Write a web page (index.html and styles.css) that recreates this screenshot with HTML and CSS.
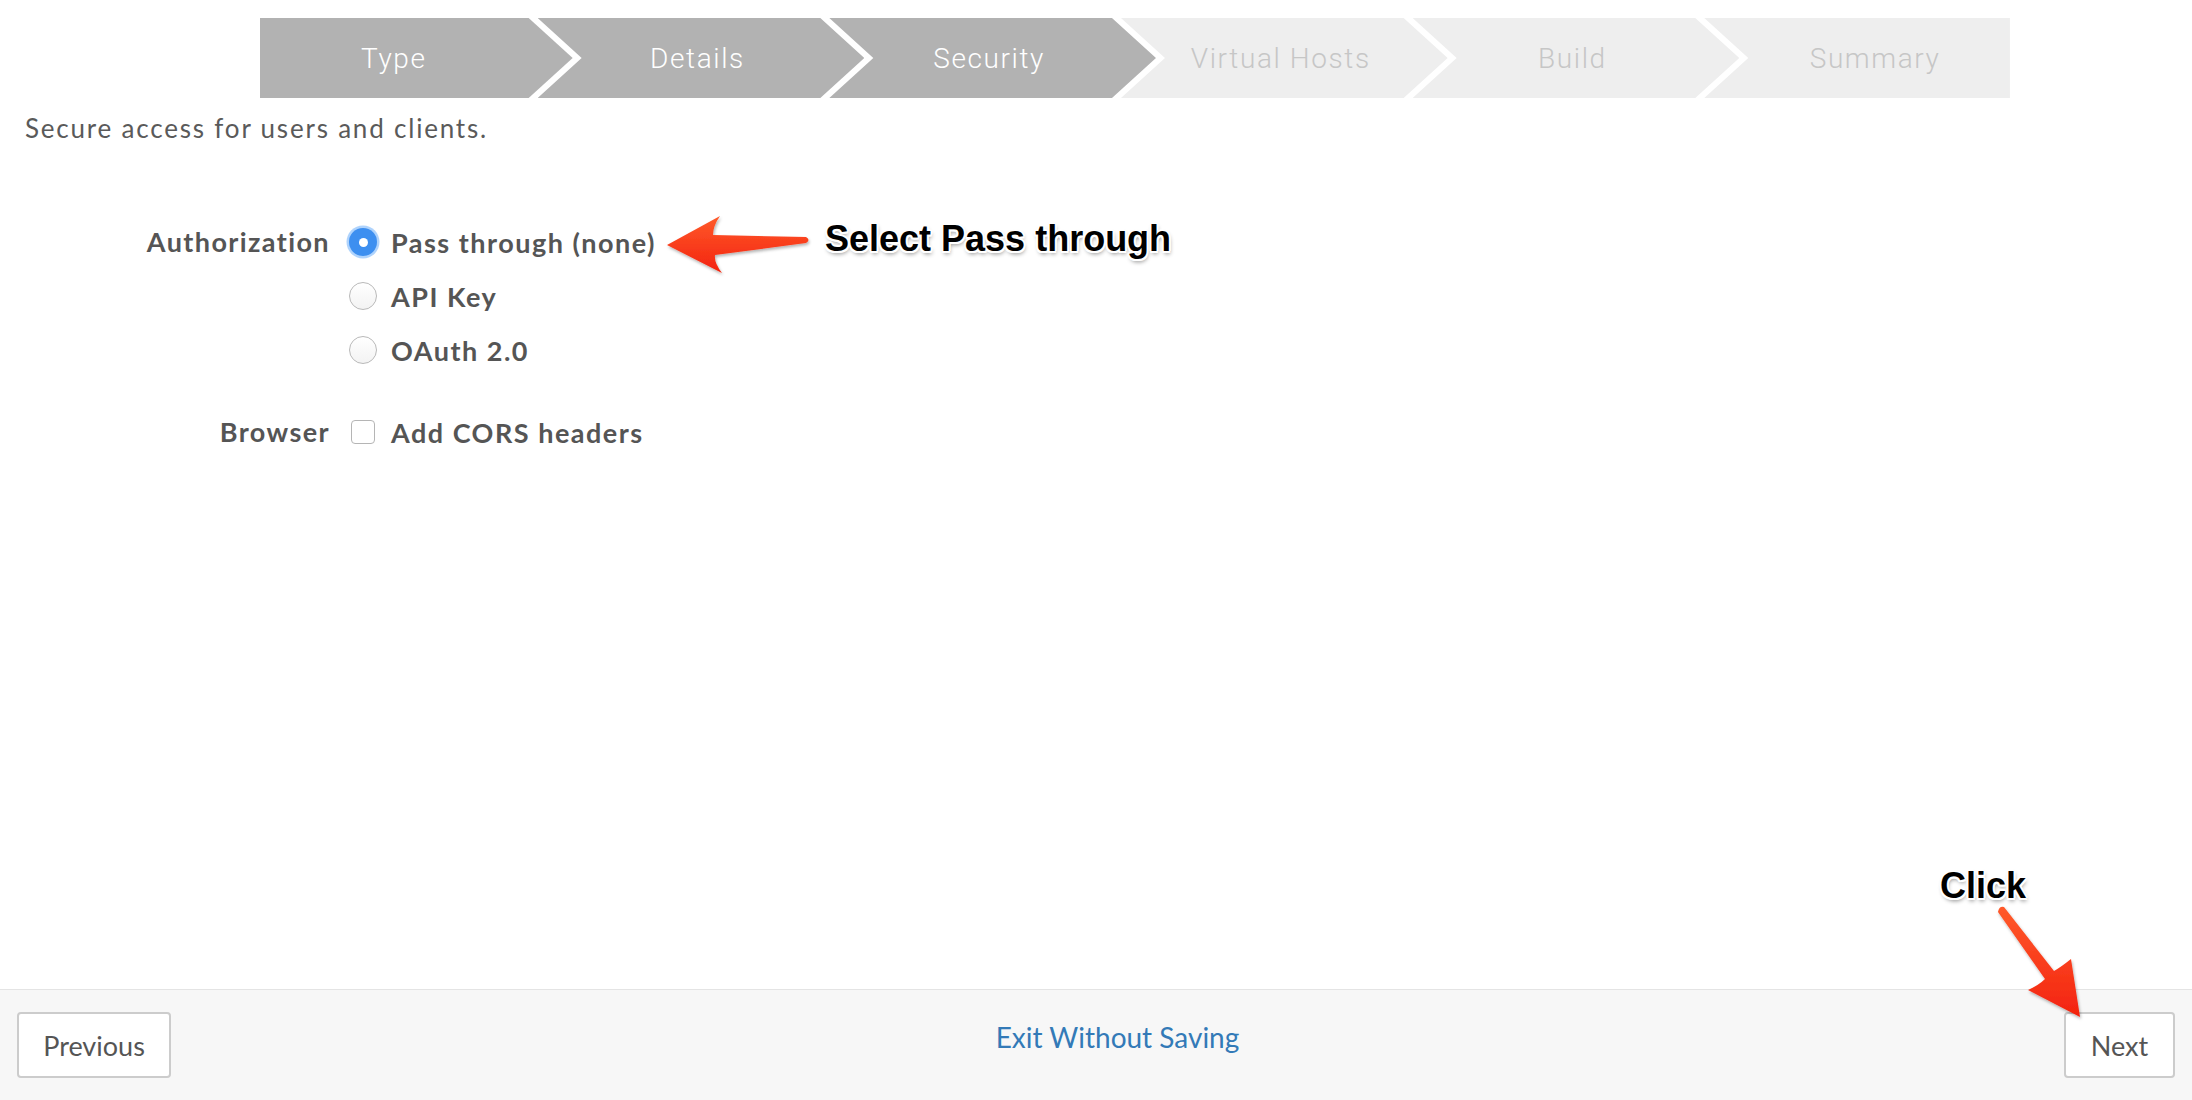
FILE: index.html
```html
<!DOCTYPE html>
<html lang="en">
<head>
<meta charset="utf-8">
<title>Build a Proxy - Security</title>
<link rel="stylesheet" href="styles.css">
</head>
<body>
<div class="page">
  <main class="content">
    <nav class="stepper">
      <div class="step done first"><span>Type</span></div>
      <div class="step done"><span>Details</span></div>
      <div class="step done"><span>Security</span></div>
      <div class="step todo"><span>Virtual Hosts</span></div>
      <div class="step todo"><span>Build</span></div>
      <div class="step todo last"><span>Summary</span></div>
    </nav>
    <p class="desc">Secure access for users and clients.</p>
    <div class="form">
      <div class="field">
        <div class="field-label">Authorization</div>
        <div class="options">
          <label class="opt"><span class="radio checked"></span><span class="opt-text">Pass through (none)</span></label>
          <label class="opt"><span class="radio"></span><span class="opt-text">API Key</span></label>
          <label class="opt"><span class="radio"></span><span class="opt-text">OAuth 2.0</span></label>
        </div>
      </div>
      <div class="field browser">
        <div class="field-label">Browser</div>
        <div class="options">
          <label class="opt"><span class="checkbox"></span><span class="opt-text">Add CORS headers</span></label>
        </div>
      </div>
    </div>
  </main>
  <footer class="footer">
    <button class="btn btn-prev" type="button">Previous</button>
    <a class="exit" href="#">Exit Without Saving</a>
    <button class="btn btn-next" type="button">Next</button>
  </footer>

  <div class="note note-select">Select Pass through</div>
  <div class="note note-click">Click</div>
  <svg class="arrows" width="2192" height="1100" viewBox="0 0 2192 1100" aria-hidden="true">
    <defs>
      <linearGradient id="red1" x1="0" y1="0" x2="0" y2="1">
        <stop offset="0" stop-color="#ff5a2a"/>
        <stop offset="1" stop-color="#f3220f"/>
      </linearGradient>
      <filter id="sh" x="-20%" y="-20%" width="140%" height="140%">
        <feDropShadow dx="1" dy="2" stdDeviation="1.5" flood-color="#000" flood-opacity="0.3"/>
      </filter>
    </defs>
    <path filter="url(#sh)" fill="url(#red1)" d="M667 245 L720 216 Q713 226 713 235 L806 237 Q811 240 806 243 L715 255 Q714 263 722 273 Z"/>
    <path filter="url(#sh)" fill="url(#red1)" d="M2080 1017 L2028 990 Q2039 985 2045 979 L1998 912 Q1999 906 2004 907 L2054 971 Q2061 967 2071 959 Z"/>
  </svg>
</div>
</body>
</html>
```

FILE: styles.css
```css
html, body {
  margin: 0;
  padding: 0;
  background: #ffffff;
}

.page {
  position: relative;
  width: 2192px;
  height: 1100px;
  display: flex;
  flex-direction: column;
  overflow: hidden;
  font-family: Lato, "Open Sans", "Liberation Sans", sans-serif;
  color: #555555;
}

.content {
  flex: 1;
}

/* ---------- stepper ---------- */
.stepper {
  display: flex;
  margin: 18px 0 0 260px;
  width: 1750px;
  height: 80px;
}

.step {
  flex: none;
  width: calc(1750px / 6);
  box-sizing: border-box;
  position: relative;
  z-index: 0;
  display: flex;
  align-items: center;
  justify-content: center;
  font-family: Roboto, "Liberation Sans", sans-serif;
  font-weight: 300;
  font-size: 28px;
  letter-spacing: 1.6px;
}

.step::before {
  content: "";
  position: absolute;
  z-index: -1;
  top: 0;
  bottom: 0;
  left: -14px;
  right: -21px;
  clip-path: polygon(0 0, calc(100% - 44px) 0, 100% 50%, calc(100% - 44px) 100%, 0 100%, 44px 50%);
}

.step.first::before {
  left: 0;
  clip-path: polygon(0 0, calc(100% - 44px) 0, 100% 50%, calc(100% - 44px) 100%, 0 100%);
}

.step.last::before {
  right: 0;
  clip-path: polygon(0 0, 100% 0, 100% 100%, 0 100%, 44px 50%);
}

.step.first { padding-right: 24px; }
.step.last { padding-left: 22px; }

.step.done { color: #ffffff; }
.step.done::before { background: #b2b2b2; }
.step.todo { color: #c6c6c6; }
.step.todo::before { background: #eeeeee; }

/* ---------- description ---------- */
.desc {
  margin: 13px 0 0 25px;
  font-size: 26px;
  line-height: 34px;
  letter-spacing: 1.8px;
  color: #5a5a5a;
}

/* ---------- form ---------- */
.form {
  margin-top: 70px;
  display: flex;
  flex-direction: column;
  gap: 28px;
}

.field {
  display: grid;
  grid-template-columns: 330px 1fr;
  column-gap: 19px;
  align-items: start;
}

.field-label {
  text-align: right;
  font-weight: 700;
  font-size: 27px;
  line-height: 54px;
  letter-spacing: 1.4px;
  color: #555555;
}

.options {
  display: flex;
  flex-direction: column;
}

.opt {
  display: flex;
  align-items: center;
  height: 54px;
  gap: 14px;
}

.opt-text {
  font-weight: 700;
  font-size: 27px;
  letter-spacing: 1.5px;
  color: #555555;
}

.radio {
  width: 28px;
  height: 28px;
  box-sizing: border-box;
  border-radius: 50%;
  border: 1.5px solid #b9b9b9;
  background: linear-gradient(#ffffff, #f3f3f3);
  position: relative;
}

.radio.checked {
  border: none;
  background: #3d8ff0;
  box-shadow: 0 0 0 2.5px rgba(110, 175, 250, 0.55);
}

.radio.checked::after {
  content: "";
  position: absolute;
  left: 50%;
  top: 50%;
  width: 9px;
  height: 9px;
  margin: -4.5px 0 0 -4.5px;
  border-radius: 50%;
  background: #ffffff;
}

.checkbox {
  width: 24px;
  height: 24px;
  margin: 0 2px;
  box-sizing: border-box;
  border: 1.5px solid #b5b5b5;
  border-radius: 4px;
  background: #ffffff;
}

/* ---------- footer ---------- */
.footer {
  height: 111px;
  box-sizing: border-box;
  border-top: 1px solid #e4e4e4;
  background: #f7f7f7;
  display: flex;
  align-items: flex-start;
  justify-content: space-between;
  padding: 22px 17px 0;
}

.btn {
  height: 66px;
  box-sizing: border-box;
  border: 2px solid #cccccc;
  border-radius: 4px;
  background: #ffffff;
  font-family: Lato, "Open Sans", sans-serif;
  font-size: 27px;
  color: #555555;
  padding: 0 24px;
}

.btn-prev { width: 154px; }
.btn-next { width: 111px; }

.exit {
  margin-top: 8px;
  font-size: 28px;
  line-height: 34px;
  color: #337ab7;
  text-decoration: none;
}

/* ---------- annotations ---------- */
.note {
  position: absolute;
  font-family: "Liberation Sans", Arial, sans-serif;
  font-weight: 700;
  font-size: 36px;
  line-height: 40px;
  color: #000000;
  text-shadow:
    -2px 0 0 #fff, 2px 0 0 #fff, 0 -2px 0 #fff, 0 2px 0 #fff,
    -1.5px -1.5px 0 #fff, 1.5px -1.5px 0 #fff, -1.5px 1.5px 0 #fff, 1.5px 1.5px 0 #fff,
    1px 3px 4px rgba(0, 0, 0, 0.45);
}

.note-select {
  left: 825px;
  top: 219px;
}

.note-click {
  left: 1940px;
  top: 866px;
}

.arrows {
  position: absolute;
  left: 0;
  top: 0;
  pointer-events: none;
}
```
